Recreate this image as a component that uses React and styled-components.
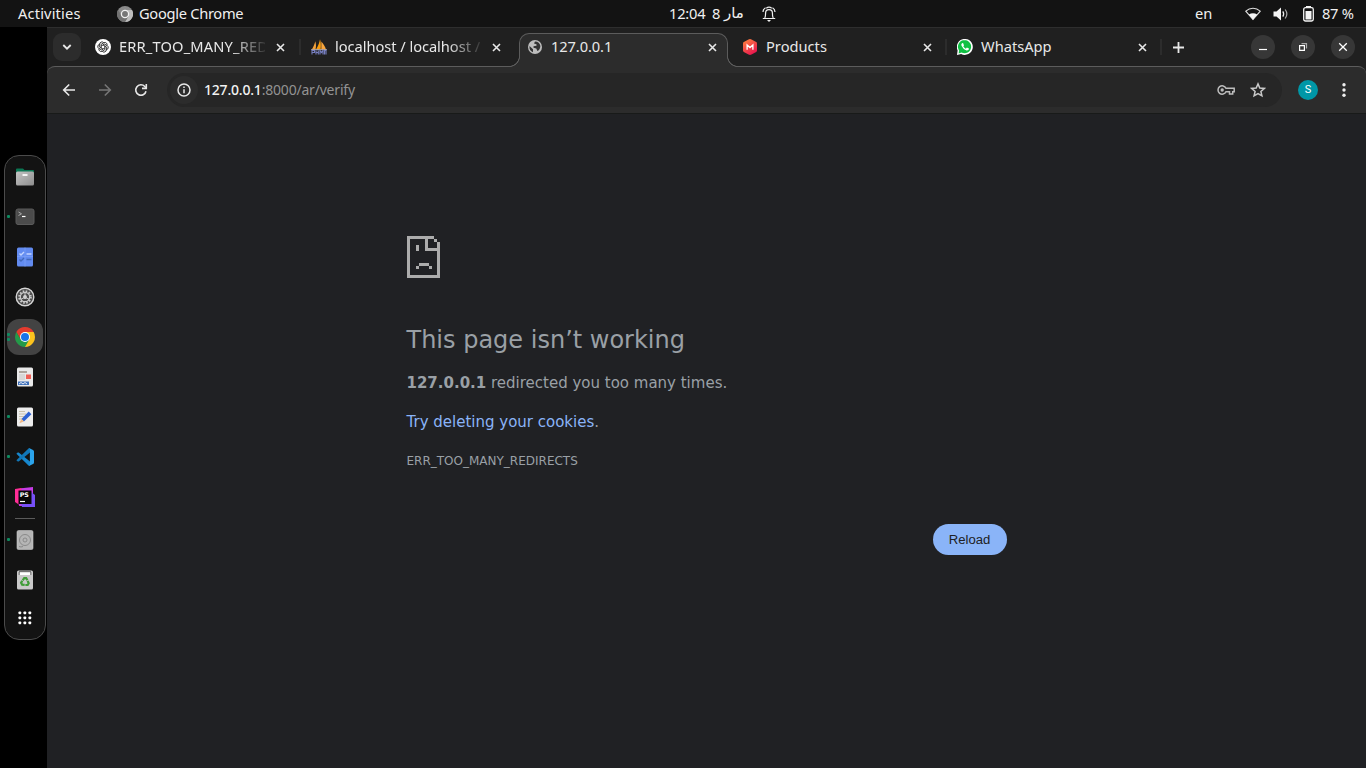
import React from "react";
import styled, { createGlobalStyle, css } from "styled-components";

const c = {
  panel: "#131313",
  strip: "#202020",
  bar: "#2c2c2c",
  line: "#5c5c5c",
  field: "#262626",
  page: "#202124",
  text: "#e8e8e8",
  dim: "#9aa0a6",
  blue: "#8ab4f8",
};

const Global = createGlobalStyle`
  * { box-sizing: border-box; }
  body { margin: 0; background: #000; overflow: hidden; }
  svg { display: block; flex: none; }
`;

const Desktop = styled.div`
  width: 1366px;
  height: 768px;
  display: grid;
  grid-template: 27px 741px / 47px 1319px;
  background: #000;
  font-family: "Noto Sans", "Open Sans", sans-serif;
  font-size: 14.67px;
  color: ${c.text};
`;

/* ---------- system panel ---------- */
const Panel = styled.header`
  grid-column: 1 / 3;
  background: ${c.panel};
  display: grid;
  grid-template-columns: 669px 526px 1fr;
  line-height: 27px;
  color: #f0f0f0;
`;
const PanelGroup = styled.div`
  display: flex;
  align-items: center;
  padding-left: ${(p) => p.$pad || 0}px;
`;
const Label = styled.span`
  width: ${(p) => p.$w}px;
  letter-spacing: ${(p) => p.$ls || 0}px;
  font-size: ${(p) => p.$size || 14.67}px;
  margin-right: ${(p) => p.$gap || 0}px;
  white-space: nowrap;
  flex: none;
`;
const Arabic = styled(Label)`
  font-family: "DejaVu Sans", sans-serif;
`;
const Slot = styled.span`
  width: ${(p) => p.$w}px;
  margin-right: ${(p) => p.$gap || 0}px;
  flex: none;
  display: flex;
  justify-content: center;
`;

/* ---------- dock ---------- */
const DockArea = styled.aside`
  padding: 128px 0 0 4px;
`;
const Dock = styled.nav`
  width: 42px;
  height: 485px;
  border: 1px solid #4b4b4b;
  border-radius: 15px;
  background: ${c.panel};
  padding-top: 1px;
  display: flex;
  flex-direction: column;
  align-items: center;
`;
const DockItem = styled.div`
  position: relative;
  width: 36px;
  height: ${(p) => p.$h || 36}px;
  margin: ${(p) => (p.$h ? 0 : "2px 0")};
  border-radius: 12px;
  display: flex;
  align-items: center;
  justify-content: center;
  background: ${(p) => (p.$active ? "#434343" : "transparent")};
`;
const Dots = styled.span`
  position: absolute;
  left: 0;
  top: 0;
  bottom: 1px;
  display: flex;
  flex-direction: column;
  justify-content: center;
  gap: 2px;
`;
const Dot = styled.i`
  width: 3px;
  height: 3px;
  border-radius: 1px;
  background: #0e8a5f;
`;
const DockRule = styled.div`
  width: 20px;
  height: 1px;
  margin: 1px 0;
  background: #5b5b5b;
`;

/* ---------- browser ---------- */
const Browser = styled.main`
  display: flex;
  flex-direction: column;
  background: ${c.strip};
`;
const TabStrip = styled.div`
  height: 39px;
  border-top: 1px solid #2e2e2e;
  display: flex;
  align-items: center;
  padding: 0 11px 0 6px;
`;
const TabSearch = styled.div`
  width: 28px;
  height: 28px;
  border-radius: 9px;
  background: ${c.bar};
  display: flex;
  align-items: center;
  justify-content: center;
  margin-right: 14px;
`;
const activeTab = css`
  position: relative;
  align-self: flex-end;
  height: 34px;
  margin: 0 14px -1px 15px;
  padding: 0 9px 7px 7px;
  background: ${c.bar};
  border: 1px solid ${c.line};
  border-bottom: 0;
  border-radius: 10px 10px 0 0;
  &::before,
  &::after {
    content: "";
    position: absolute;
    bottom: 0;
    width: 11px;
    height: 11px;
  }
  &::before {
    left: -11px;
    background: radial-gradient(circle at 0 0, ${c.strip} 9.6px, ${c.line} 10.2px, ${c.line} 10.7px, ${c.bar} 11.3px);
  }
  &::after {
    right: -11px;
    background: radial-gradient(circle at 100% 0, ${c.strip} 9.6px, ${c.line} 10.2px, ${c.line} 10.7px, ${c.bar} 11.3px);
  }
`;
const TabBox = styled.div`
  width: ${(p) => p.$w}px;
  flex: none;
  display: flex;
  align-items: center;
  ${(p) => p.$active && activeTab}
`;
const TabTitle = styled.span`
  width: 146px;
  margin-left: 8px;
  padding-bottom: 2px;
  white-space: nowrap;
  line-height: 20px;
  letter-spacing: ${(p) => p.$ls || 0}px;
  mask-image: ${(p) => (p.$fade ? "linear-gradient(90deg, #000 112px, transparent 150px)" : "none")};
`;
const TabClose = styled.span`
  width: 11px;
  margin-left: 10px;
  display: flex;
  justify-content: center;
`;
const Separator = styled.i`
  width: 2px;
  height: 16px;
  flex: none;
  background: ${c.bar};
  margin: 0 ${(p) => p.$r}px 0 ${(p) => p.$l}px;
`;
const WindowButtons = styled.div`
  display: flex;
  gap: 16px;
  margin-left: auto;
`;
const WindowButton = styled.span`
  width: 24px;
  height: 24px;
  border-radius: 50%;
  background: #373737;
  display: flex;
  align-items: center;
  justify-content: center;
`;
const Toolbar = styled.div`
  height: 48px;
  border-top: 1px solid ${c.line};
  border-bottom: 1px solid #181a19;
  border-radius: 8px 8px 0 0;
  background: ${c.bar};
  display: flex;
  align-items: center;
  padding: 0 12px 0 12px;
`;
const NavButton = styled.span`
  width: 20px;
  margin-right: 16px;
  display: flex;
  justify-content: center;
`;
const Omnibox = styled.div`
  width: 1115px;
  height: 34px;
  border-radius: 17px;
  background: ${c.field};
  display: flex;
  align-items: center;
  padding: 0 16px 0 3px;
`;
const InfoChip = styled.span`
  width: 28px;
  height: 28px;
  border-radius: 50%;
  background: #2c2c2c;
  display: flex;
  align-items: center;
  justify-content: center;
  margin-right: 6px;
`;
const Url = styled.span`
  flex: 1;
  padding-bottom: 2px;
  font-size: 14px;
  letter-spacing: -0.2px;
  color: #939393;
  b { font-weight: 500; color: #f2f2f2; }
`;
const Avatar = styled.span`
  width: 20px;
  height: 20px;
  border-radius: 50%;
  background: #0097a7;
  color: #fff;
  font: 11px/20px Roboto, sans-serif;
  text-align: center;
  margin: 0 16px;
`;

/* ---------- error page ---------- */
const Page = styled.section`
  flex: 1;
  background: ${c.page};
  padding-top: 122px;
  font-family: "DejaVu Sans", sans-serif;
  color: ${c.dim};
`;
const ErrorBox = styled.div`
  width: 600px;
  margin: 0 auto;
  font-size: 15px;
  line-height: 24px;
`;
const Title = styled.h1`
  margin: 47px 0 16px;
  font-size: 24px;
  font-weight: 500;
  line-height: 30px;
`;
const Para = styled.p`
  margin: 0 0 15px;
  a { color: ${c.blue}; text-decoration: none; }
`;
const Code = styled.div`
  font-size: 12px;
  line-height: 24px;
`;
const Actions = styled.div`
  margin-top: 51px;
  display: flex;
  justify-content: flex-end;
`;
const Reload = styled.button`
  width: 74px;
  height: 31px;
  padding: 0;
  border: 0;
  border-radius: 16px;
  background: ${c.blue};
  color: ${c.page};
  font: 13.125px "Liberation Sans", sans-serif;
`;

/* ---------- icons ---------- */
const Stroke = ({ s = 16, d, w = 1.8, color = c.text, cap = "butt", children }) => (
  <svg width={s} height={s} viewBox={`0 0 ${s} ${s}`} fill="none" stroke={color} strokeWidth={w} strokeLinecap={cap}>
    {d && <path d={d} />}
    {children}
  </svg>
);
const Cross = () => <Stroke s={11} w={1.6} d="M2 2 9 9M9 2 2 9" />;

const ChromeMono = () => (
  <svg width="16" height="16" viewBox="0 0 16 16">
    <circle cx="8" cy="8" r="8" fill="#8a8a8a" />
    <path d="M8 4h7a8 8 0 0 1-7 12l3.5-6z" fill="#bdbdbd" />
    <path d="M1 4a8 8 0 0 0 7 12l3-5-6-1z" fill="#727272" />
    <circle cx="8" cy="8" r="3.6" fill="#777" stroke="#f2f2f2" strokeWidth="1.3" />
  </svg>
);
const Bell = () => (
  <Stroke s={16} w={1.2} color="#f0f0f0">
    <path d="M1.800 12.500h12.400M3.800 12c.8-1.500.8-3 .8-5a3.400 3.400 0 0 1 6.800 0c0 2 0 3.500.8 5M2 6c0-2 1-3.500 2.500-4.300M14 6c0-2-1-3.500-2.500-4.300M5.300 2.200C7 .8 9 .8 10.700 2.200" />
    <path d="M6 14h4l-2 1.900z" fill="#f0f0f0" stroke="none" />
  </Stroke>
);
const Wifi = () => (
  <svg width="16" height="14" viewBox="0 0 16 14">
    <path d="M.8 4.200C5 .3 11 .3 15.200 4.200L8 12.500z" fill="none" stroke="#dedede" strokeWidth="1.100" />
    <path d="M3.800 7.600Q8 4.800 12.200 7.600L8 12.800z" fill="#f4f4f4" />
  </svg>
);
const Speaker = () => (
  <svg width="16" height="14" viewBox="0 0 16 14">
    <path d="M.5 4.500h3L8 .5v13l-4.500-4h-3z" fill="#f4f4f4" />
    <path d="M9.800 4.300q1.800 2.700 0 5.400" fill="none" stroke="#f0f0f0" strokeWidth="1.200" />
    <path d="M12.200 2.500q3.300 4.500 0 9" fill="none" stroke="#aaa" strokeWidth="1.200" />
  </svg>
);
const Battery = () => (
  <svg width="11" height="16" viewBox="0 0 11 16">
    <path d="M3 0h5v2H3z" fill="#f4f4f4" />
    <rect x=".7" y="1.700" width="9.600" height="13.300" rx="1.800" fill="none" stroke="#f4f4f4" strokeWidth="1.300" />
    <path d="M2.500 5h6v8.500h-6z" fill="#f4f4f4" />
  </svg>
);
const OpenAI = () => (
  <svg width="16" height="16" viewBox="0 0 16 16">
    <circle cx="8" cy="8" r="8" fill="#fff" />
    <g fill="none" stroke="#222" strokeWidth=".85">
      {[0, 60, 120, 180, 240, 300].map((a) => (
        <path key={a} transform={`rotate(${a} 8 8)`} d="M6.200 9V5.300L8.800 3.700A2.300 2.300 0 0 1 12 6.600" />
      ))}
    </g>
  </svg>
);
const PhpMyAdmin = () => (
  <svg width="16" height="16" viewBox="0 0 16 16">
    <path d="M.8 10.500C2.500 8 3.500 5 4.300 2.200 5.200 5 5.200 8 4.500 10.500z" fill="#f3a23b" />
    <path d="M5 10.500C7 7 8.300 4 9 .3c.9 3 1.100 6.500.6 10.200z" fill="#f89c0e" />
    <path d="M10.300 2.500c2 2.400 3.800 5 4.700 8H10.300z" fill="#f7a53d" />
    <path d="M0 10.700h16" stroke="#d9dbef" strokeWidth=".7" />
    <path d="M1 15.500v-4h2.500v2H1M5 15.500v-4M5 13.500h2M7.300 15.500v-4M9 15.500v-4l1.500 2 1.500-2v4M13.500 15.500v-4H15v4" fill="none" stroke="#777fc0" strokeWidth="1.100" />
  </svg>
);
const Globe = () => (
  <svg width="14" height="14" viewBox="0 0 14 14">
    <circle cx="7" cy="7" r="7" fill="#bdbdbd" />
    <path d="M1.500 6 5 9.200v3c-2.500-.8-4-3-3.500-6.200zM7 1.400c3 0 5 2 5.400 4.600-.2 3-1.700 4.400-3 5L8.300 8.600 5.500 7.800V6.300l3-.6V4.200L6 3.500z" fill="#333" />
  </svg>
);
const Magento = () => (
  <svg width="16" height="16" viewBox="0 0 16 16">
    <defs><linearGradient id="hex" x2=".6" y2="1"><stop stopColor="#ff8a3d" /><stop offset="1" stopColor="#e8174f" /></linearGradient></defs>
    <path d="M8 0q.8 0 1.500.4l4.700 2.700q.8.5.8 1.400v7q0 .9-.8 1.400l-4.700 2.700q-1.500.8-3 0l-4.700-2.700Q1 12.400 1 11.500v-7q0-.9.8-1.400L6.500.4Q7.200 0 8 0z" fill="url(#hex)" />
    <path d="M5.100 10.800V5.900L8 8.600l2.900-2.700v4.900" fill="none" stroke="#fff" strokeWidth="1.300" />
  </svg>
);
const WhatsApp = () => (
  <svg width="16" height="16" viewBox="0 0 16 16">
    <path d="M0 16l.6-4.600A8 8 0 1 1 4.100 15z" fill="#fff" />
    <path d="M1.600 14.400l.5-2.900A6.600 6.600 0 1 1 4.500 13.600z" fill="#0fc143" />
    <path d="M5.200 4q-1.400 1-.7 2.800 1.500 3.500 5 4.700 2 .3 2.500-1.400l-.1-.6-2-.9-1.100 1.100Q6.800 8.700 6.300 7.300L7 6.400 6.200 4.200z" fill="#fff" />
  </svg>
);

const Folder = () => (
  <svg width="20" height="20" viewBox="0 0 20 20">
    <path d="M1 2.500q0-1 1-1h6l1.500 1.500H18q1 0 1 1V9H1z" fill="#0b7653" />
    <defs><linearGradient id="folder" x2="1" y2="1"><stop stopColor="#c4c4c4" /><stop offset="1" stopColor="#8d8d8d" /></linearGradient></defs>
    <rect x="1" y="4.500" width="18" height="14" rx="1.500" fill="url(#folder)" />
    <path d="M7.500 7h5v2h-5z" fill="#f4f4f4" />
  </svg>
);
const Terminal = () => (
  <svg width="20" height="20" viewBox="0 0 20 20">
    <rect x="1" y="2" width="18" height="15.500" rx="2" fill="#4b4b4b" stroke="#5a5a5a" />
    <path d="M3.500 5 6.500 6.800 3.500 8.500" fill="none" stroke="#aaa" />
    <path d="M7 9.500h3.500" stroke="#fff" strokeWidth="1.200" />
  </svg>
);
const Todo = () => (
  <svg width="20" height="20" viewBox="0 0 20 20">
    <rect x="2" y=".5" width="16" height="19" rx="1.500" fill="#628bf0" />
    <path d="M2 9.500h16M10 .5v19" stroke="#7da1f7" strokeWidth=".7" />
    <path d="m4.500 6.500 1.500 1.500 3-3M11.500 7h5" fill="none" stroke="#c4d5ff" strokeWidth="1.400" />
    <path d="m4.500 12.500 1.500 1.500 3-3M11.500 12.500h5" fill="none" stroke="#4268b9" strokeWidth="1.400" />
  </svg>
);
const Settings = () => (
  <svg width="20" height="20" viewBox="0 0 20 20" fill="none">
    <circle cx="10" cy="10" r="8.800" stroke="#d5d5d5" strokeWidth="1.400" fill="#4c4c4c" />
    <circle cx="10" cy="10" r="5.900" stroke="#ccc" strokeWidth="1.800" strokeDasharray="1.600 1.490" />
    <circle cx="10" cy="10" r="4.700" stroke="#ccc" strokeWidth="1.200" />
    <circle cx="10" cy="10" r="1.900" fill="#ddd" />
    <path d="M10 10V5.500M10 10l4 2.300M10 10l-4 2.300" stroke="#ccc" />
  </svg>
);
const Chrome = () => (
  <svg width="20" height="20" viewBox="0 0 20 20">
    <path d="M10 5h8.660A10 10 0 0 0 1.340 5l4.330 7.500z" fill="#e33b2e" />
    <path d="M18.660 5H10v7.500L10 20A10 10 0 0 0 18.660 5z" fill="#fcc31e" />
    <path d="M1.340 5A10 10 0 0 0 10 20l4.330-7.500-8.660 0z" fill="#249a49" />
    <circle cx="10" cy="10" r="5" fill="#fff" />
    <circle cx="10" cy="10" r="4" fill="#1a73e8" />
  </svg>
);
const News = () => (
  <svg width="20" height="20" viewBox="0 0 20 20">
    <rect x="2" y=".5" width="16" height="19" rx="1.500" fill="#e9e9e9" />
    <path d="M4 5h8" stroke="#85786a" strokeWidth="1.200" />
    <path d="M4 8h6M4 10h6M4 12h6" stroke="#bbb" strokeWidth=".8" />
    <path d="M11 7.500h5v4.500h-5z" fill="#ef5f55" />
    <path d="M3 14.500h11v3.500H3z" fill="#3f71ba" />
    <path d="m4 17 2-1.500 2 1.500 2-1.500 2 1.500" fill="none" stroke="#e9eef8" />
  </svg>
);
const Notes = () => (
  <svg width="20" height="20" viewBox="0 0 20 20">
    <rect x="2" y=".5" width="16" height="19" rx="1.500" fill="#ededed" />
    <path d="M4 4.500h6M4 7h7M4 9.500h5M4 12h3" stroke="#c9c1ad" />
    <path d="m6.500 12 7.200-7.500 2.700 2.700-7.500 7.200z" fill="#2d62d3" />
    <path d="m6.500 12 2.400 2.400-4.600 1.900z" fill="#f0b785" />
  </svg>
);
const VSCode = () => (
  <svg width="20" height="20" viewBox="0 0 20 20">
    <path d="m1.400 6.700 1.300-1.100q.5-.3 1 0L15 14.500v4L14 19z" fill="#1787cd" />
    <path d="m1.400 13.300 1.300 1.100q.5.300 1 0L15 5.500v-4L14 1z" fill="#1177b8" />
    <path d="M14 1l4 1.900q1 .5 1 1.500v11.200q0 1-1 1.500L14 19q.9-.7.900-1.500v-15Q14.900 1.700 14 1z" fill="#2ba4ec" />
  </svg>
);
const PhpStorm = () => (
  <svg width="20" height="20" viewBox="0 0 20 20">
    <path d="M0 2 6 1 13 4 6 19 0 15z" fill="#ff2d96" />
    <path d="M6.500 1.200 18 0v9L8 19H4z" fill="#c63be6" />
    <path d="M16 5l4 3v12H7l-1-4z" fill="#7750f7" />
    <path d="M3.500 3.500h13V17h-13z" fill="#080808" />
    <path d="M5 14.500h5" stroke="#fff" strokeWidth="1.200" />
    <text x="4.700" y="10" fill="#fff" fontFamily="DejaVu Sans, sans-serif" fontWeight="700" fontSize="6.300">PS</text>
  </svg>
);
const Disk = () => (
  <svg width="20" height="20" viewBox="0 0 20 20" fill="none">
    <rect x="2" y=".5" width="16" height="19" rx="1.500" fill="#b5b5b5" stroke="#c9c9c9" strokeWidth=".6" />
    <circle cx="10" cy="10" r="5.500" stroke="#858585" strokeWidth=".9" />
    <circle cx="10" cy="10" r="2" stroke="#858585" strokeWidth=".9" />
    <path d="M4 16.500q2 1 4 0" stroke="#888" />
  </svg>
);
const Trash = () => (
  <svg width="20" height="20" viewBox="0 0 20 20">
    <rect x="2" y=".5" width="16" height="19" rx="1.500" fill="#c9c9c9" />
    <path d="M4 2h12v3H4z" fill="#fff" />
    <path d="M4 1.700h12M4.200 2v3M15.800 2v3" stroke="#555" strokeWidth=".9" />
    <g fill="none" stroke="#3f9c37" strokeWidth="2.200">
      {[0, 120, 240].map((a) => <path key={a} transform={`rotate(${a} 10 12)`} d="m7.700 10.300 1.500-2.100h2l1.200 2" />)}
    </g>
  </svg>
);
const Apps = () => (
  <svg width="14" height="14" viewBox="0 0 14 14" fill="#fff">
    {[0, 1, 2].map((y) => [0, 1, 2].map((x) => <rect key={`${x}${y}`} x={0.5 + x * 5} y={0.5 + y * 5} width="2.700" height="2.700" rx=".7" />))}
  </svg>
);
const SadPage = () => (
  <svg width="33" height="42" viewBox="0 0 33 42" fill="#acacac" shapeRendering="crispEdges">
    <path d="M0 0h27v3H3v36h27V6h3v36H0zM27 3h3v3h-3zM18 3h3v9h9v3H18zM9 9h3v6H9zM12 27h10v3H12zM9 30h3v3H9zM22 30h3v3h-3z" />
  </svg>
);

const dockTop = [
  [Folder, 0], [Terminal, 1], [Todo, 0], [Settings, 0], [Chrome, 2, true],
  [News, 0], [Notes, 1], [VSCode, 1], [PhpStorm, 0],
];
const dockBottom = [[Disk, 1], [Trash, 0]];

const DockEntry = ({ item: [Icon, dots, active] }) => (
  <DockItem $active={active}>
    {dots > 0 && <Dots>{Array.from({ length: dots }, (_, i) => <Dot key={i} />)}</Dots>}
    <Icon />
  </DockItem>
);

const Tab = ({ icon, title, fade, active, ls, w = 193 }) => (
  <TabBox $w={w} $active={active}>
    <Slot $w={16}>{icon}</Slot>
    <TabTitle $fade={fade} $ls={ls}>{title}</TabTitle>
    <TabClose><Cross /></TabClose>
  </TabBox>
);

export default function App() {
  return (
    <Desktop>
      <Global />
      <Panel>
        <PanelGroup $pad={18}>
          <Label $w={63} $gap={36} $ls={0.15}>Activities</Label>
          <Slot $w={16} $gap={6}><ChromeMono /></Slot>
          <Label $w={110} $ls={-0.3}>Google Chrome</Label>
        </PanelGroup>
        <PanelGroup>
          <Label $w={36} $gap={7} $ls={-0.2}>12:04</Label>
          <Label $w={9} $gap={3}>8</Label>
          <Arabic $w={20} $gap={17} $size={15}>مار</Arabic>
          <Slot $w={16}><Bell /></Slot>
        </PanelGroup>
        <PanelGroup>
          <Label $w={17} $gap={33}>en</Label>
          <Slot $w={16} $gap={12}><Wifi /></Slot>
          <Slot $w={16} $gap={14}><Speaker /></Slot>
          <Slot $w={11} $gap={8}><Battery /></Slot>
          <Label $w={32} $ls={-0.3}>87 %</Label>
        </PanelGroup>
      </Panel>

      <DockArea>
        <Dock>
          {dockTop.map((item, i) => <DockEntry key={i} item={item} />)}
          <DockRule />
          {dockBottom.map((item, i) => <DockEntry key={i} item={item} />)}
          <DockItem $h={36}><Apps /></DockItem>
        </Dock>
      </DockArea>

      <Browser>
        <TabStrip>
          <TabSearch><Stroke s={10} d="M1.300 3 5 6.700 8.700 3" /></TabSearch>
          <Tab icon={<OpenAI />} title="ERR_TOO_MANY_RED" fade ls={0.15} />
          <Separator $l={11} $r={10} />
          <Tab icon={<PhpMyAdmin />} title="localhost / localhost /" fade ls={-0.05} />
          <Tab icon={<Globe />} title="127.0.0.1" active w={209} ls={-0.1} />
          <Tab icon={<Magento />} title="Products" w={191} />
          <Separator $l={12} $r={10} />
          <Tab icon={<WhatsApp />} title="WhatsApp" />
          <Separator $l={10} $r={11} />
          <Stroke s={11} w={1.800} d="M5.500 0v11M0 5.500h11" />
          <WindowButtons>
            <WindowButton><Stroke s={10} w={1.200} color="#fff" d="M1 7.500h8" /></WindowButton>
            <WindowButton>
              <Stroke s={10} w={1.200} color="#fff">
                <path d="M1.600 3.600h4.800v4.800H1.600z" />
                <path d="M3.500 1.600h5v5" stroke="#aaa" />
              </Stroke>
            </WindowButton>
            <WindowButton><Stroke s={10} w={1.300} color="#fff" d="m1.200 1.200 7.600 7.600M8.800 1.200 1.200 8.800" /></WindowButton>
          </WindowButtons>
        </TabStrip>

        <Toolbar>
          <NavButton><Stroke s={14} w={1.600} d="M13 7H2M7.200 1.500 1.700 7l5.500 5.500" /></NavButton>
          <NavButton><Stroke s={14} w={1.600} color="#757575" d="M1 7h11M6.800 1.500 12.300 7l-5.500 5.500" /></NavButton>
          <NavButton>
            <Stroke s={14} w={1.600}>
              <path d="M12 8.200A5.200 5.200 0 1 1 10.800 3.500L12 4.700" />
              <path d="M12.300 1v4.400H8" />
            </Stroke>
          </NavButton>
          <Omnibox>
            <InfoChip>
              <Stroke s={14} w={1.500}>
                <circle cx="7" cy="7" r="6" />
                <path d="M7 6.200v4M7 3.600v1.500" />
              </Stroke>
            </InfoChip>
            <Url><b>127.0.0.1</b>:8000/ar/verify</Url>
            <Slot $w={18} $gap={15}>
              <svg width="18" height="12" viewBox="0 0 18 12" fill="none" stroke="#bdbdbd" strokeWidth="1.500">
                <path d="M9 4.200A4.200 4.200 0 1 0 9 7.800h3.500V10h3.200V7.800h1.500V4.200z" />
                <circle cx="5.200" cy="6" r="1.700" fill="#bdbdbd" stroke="none" />
              </svg>
            </Slot>
            <Slot $w={16}>
              <Stroke s={16} w={1.500} color="#c9c9c9" d="M8 1.900 9.800 6l4.500.4-3.400 3 1 4.400L8 11.500l-3.900 2.300 1-4.400-3.400-3L6.200 6z" />
            </Slot>
          </Omnibox>
          <Avatar>S</Avatar>
          <Slot $w={20}>
            <svg width="4" height="14" viewBox="0 0 4 14" fill="#eee">
              <circle cx="2" cy="1.700" r="1.700" /><circle cx="2" cy="7" r="1.700" /><circle cx="2" cy="12.300" r="1.700" />
            </svg>
          </Slot>
        </Toolbar>

        <Page>
          <ErrorBox>
            <SadPage />
            <Title>This page isn’t working</Title>
            <Para><strong>127.0.0.1</strong> redirected you too many times.</Para>
            <Para><a>Try deleting your cookies</a>.</Para>
            <Code>ERR_TOO_MANY_REDIRECTS</Code>
            <Actions><Reload>Reload</Reload></Actions>
          </ErrorBox>
        </Page>
      </Browser>
    </Desktop>
  );
}
